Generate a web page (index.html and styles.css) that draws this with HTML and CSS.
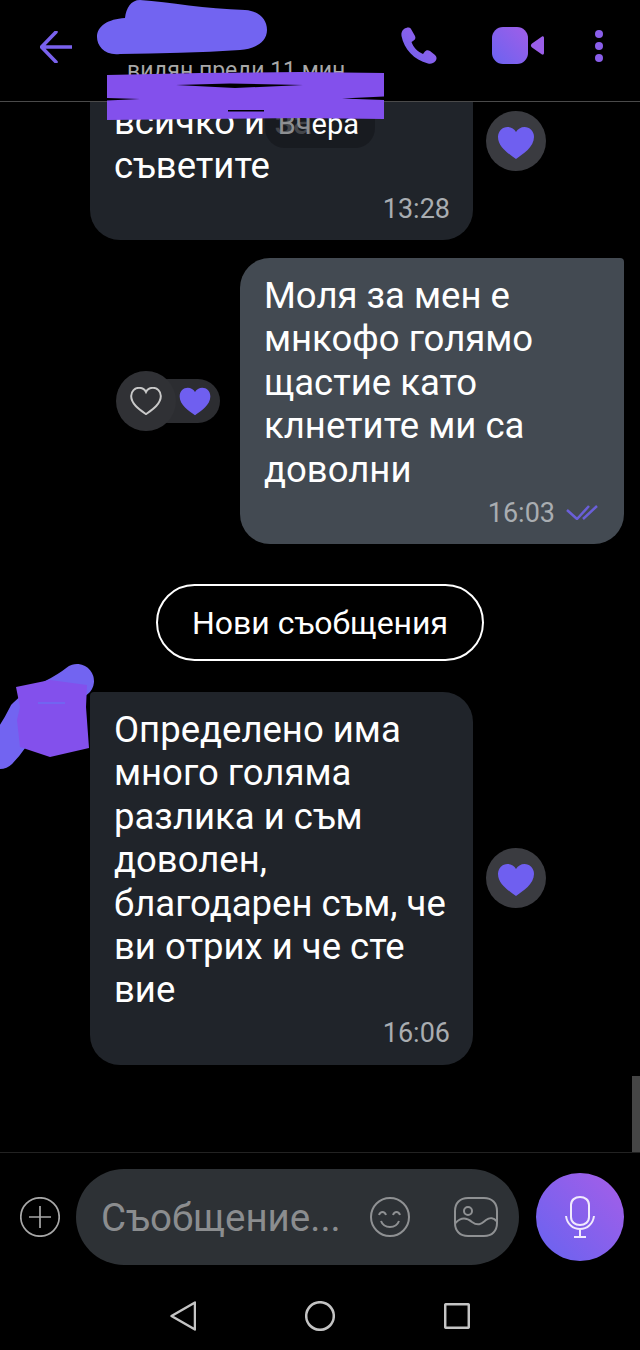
FILE: index.html
```html
<!DOCTYPE html>
<html lang="bg">

<head>
    <meta charset="UTF-8">
    <meta name="viewport" content="width=device-width, initial-scale=1.0">
    <title>Чат</title>
    <link rel="stylesheet" href="styles.css">
</head>

<body>
<div class="app">
    <svg class="defs" width="0" height="0">
        <defs>
            <linearGradient id="violet" x1="0" y1="1" x2="1" y2="0">
                <stop offset="0" stop-color="#6b63f0"/>
                <stop offset="1" stop-color="#a05ee8"/>
            </linearGradient>
            <path id="heart" d="M19 33C12 28 1 21 1 11 1 5 5.500 1 10.500 1 14 1 17.500 3 19 6 20.500 3 24 1 27.500 1 32.500 1 37 5 37 11 37 21 26 28 19 33Z"/>
        </defs>
    </svg>

    <div class="header">
        <svg class="back" width="32" height="32" viewBox="0 0 32 32">
            <path d="M32 16H2M16 1 1.500 16 16 31"/>
        </svg>
        <div class="title">
            <div class="status">видян преди 11 мин</div>
        </div>
        <div class="actions">
            <svg class="call" width="36" height="37" viewBox="0 0 36 37">
                <path fill="url(#violet)" d="M3 2C6 0 9 0 10 2L14 9C15 11 14 13 12 14L10.500 15C12 20 17 25 22 27L23.500 25C25 23 27 23 29 24L34 28C36 30 36 32 34.500 34 32.500 36.500 30 37 27 36.500 13 33 3 22 .5 9 0 6 1 3.500 3 2Z"/>
            </svg>
            <svg class="video" width="52" height="37" viewBox="0 0 52 37">
                <rect width="36" height="37" rx="11" fill="url(#violet)"/>
                <path fill="#9a5ee8" d="M50 9.500C51.500 9 52 10 52 11V26C52 27 51.500 28 50 27.500L40 20.500C38.500 19.500 38.500 17.500 40 16.500Z"/>
            </svg>
            <svg class="dots" width="8" height="32" viewBox="0 0 8 32">
                <circle cx="4" cy="4" r="4" fill="#8a5eea"/>
                <circle cx="4" cy="16" r="4" fill="#8a5eea"/>
                <circle cx="4" cy="28" r="4" fill="#8a5eea"/>
            </svg>
        </div>
    </div>

    <div class="chat">
        <div class="date-pill"><span class="faded">Вч</span>ера</div>

        <div class="row row-in row-first">
            <div class="bubble bubble-in bubble-cut">
                <div class="text">всичко и <span class="faded">за</span><br>съветите</div>
                <div class="meta"><span class="time">13:28</span></div>
            </div>
            <div class="reaction">
                <svg width="38" height="34" viewBox="0 0 38 34"><use href="#heart" fill="#6f5ff0"/></svg>
            </div>
        </div>

        <div class="row row-out">
            <div class="reaction-pair">
                <div class="reaction">
                    <svg width="32" height="28" viewBox="0 0 38 34"><use href="#heart" fill="none" stroke="#c9c9c9" stroke-width="2.400"/></svg>
                </div>
                <div class="like-pill">
                    <svg width="34" height="29" viewBox="0 0 38 34"><use href="#heart" fill="#6f5ff0"/></svg>
                </div>
            </div>
            <div class="bubble bubble-out">
                <div class="text">Моля за мен е<br>мнкофо голямо<br>щастие като<br>клнетите ми са<br>доволни</div>
                <div class="meta">
                    <span class="time">16:03</span>
                    <svg class="ticks" width="32" height="15" viewBox="0 0 32 15">
                        <path d="M1 5 11 14 23 1M17 14 31 1"/>
                    </svg>
                </div>
            </div>
        </div>

        <div class="new-messages">Нови съобщения</div>

        <div class="row row-in">
            <div class="bubble bubble-in bubble-first">
                <div class="text">Определено има<br>много голяма<br>разлика и съм<br>доволен,<br>благодарен съм, че<br>ви отрих и че сте<br>вие</div>
                <div class="meta"><span class="time">16:06</span></div>
            </div>
            <div class="reaction">
                <svg width="38" height="34" viewBox="0 0 38 34"><use href="#heart" fill="#6f5ff0"/></svg>
            </div>
        </div>

        <div class="scrollbar"></div>
    </div>

    <div class="composer">
        <svg class="line-icon plus" width="40" height="40" viewBox="0 0 40 40">
            <circle cx="20" cy="20" r="19.200"/>
            <path d="M20 9V31M9 20H31"/>
        </svg>
        <div class="input">
            <span class="placeholder">Съобщение...</span>
            <svg class="line-icon" width="40" height="40" viewBox="0 0 40 40">
                <circle cx="20" cy="20" r="19"/>
                <path d="M9 18C10.500 14 14.500 14 16 18M23 18C24.500 14 28.500 14 30 18M11 24C14 32 26 32 29 24"/>
            </svg>
            <svg class="line-icon gallery" width="44" height="40" viewBox="0 0 44 40">
                <path d="M14 1H30C38 1 43 6 43 14V26C43 34 38 39 30 39H14C6 39 1 34 1 26V14C1 6 6 1 14 1Z"/>
                <circle cx="14" cy="14" r="4"/>
                <path d="M1.500 26C7 20 12 20 18 25 25 30 28 26 32 23 36 20 40 21 42.500 24"/>
            </svg>
        </div>
        <div class="mic">
            <svg width="30" height="42" viewBox="0 0 30 42">
                <path d="M15 1C10 1 6 4 6 9V21C6 26 10 29 15 29 20 29 24 26 24 21V9C24 4 20 1 15 1ZM1 20C2 28 8 33 15 33 22 33 28 28 29 20M15 33V41M9 41H21"/>
            </svg>
        </div>
    </div>

    <div class="nav">
        <svg width="26" height="30" viewBox="0 0 26 30"><path d="M25 1.500V28.500L1.500 15Z"/></svg>
        <svg width="30" height="30" viewBox="0 0 30 30"><circle cx="15" cy="15" r="13.800"/></svg>
        <svg width="26" height="26" viewBox="0 0 26 26"><rect x="1.200" y="1.200" width="23.600" height="23.600" rx="1"/></svg>
    </div>

    <!-- закриване на имена и аватар, нарисувано върху снимката -->
    <svg class="scribbles" width="640" height="1350" viewBox="0 0 640 1350">
        <path fill="#7264f1" d="M125 18C126 8 131 0 140 0 170 2 205 9 245 10 260 11 267 20 267 30 267 42 255 49 240 50 200 53 160 53 120 54 105 56 97 46 97 37 97 26 108 19 125 18Z"/>
        <path fill="#8350ec" d="M107 75 200 73 300 72 384 73 384 119 300 118 200 119 107 120Z"/>
        <path fill="#000" d="M176 85 230 83.500 303 85 235 88ZM107 98 140 99 107 100.500ZM342 98.500 384 96.500 384 100ZM228 110H264V111.500H228Z"/>
        <path fill="none" stroke="#7264f1" stroke-width="34" stroke-linecap="round" d="M77 681C60 695 40 700 25 715 20 725 10 742 0 752"/>
        <path fill="#8350ec" d="M16 687 50 680 87 685 86 707 89 748 50 757 20 747 17 720 20 707Z"/>
        <path fill="#7264f1" d="M38 702H65V704H38Z"/>
    </svg>
</div>
</body>

</html>
```

FILE: styles.css
```css
html,
body {
    margin: 0;
    padding: 0;
    background: #000;
}

.app {
    width: 640px;
    height: 1350px;
    position: relative;
    overflow: hidden;
    display: flex;
    flex-direction: column;
    background: #000;
    color: #fff;
    font-family: Roboto, "Noto Sans", sans-serif;
}

.defs {
    position: absolute;
}

.faded {
    color: #8d8f92;
}

.header {
    height: 102px;
    flex: none;
    display: flex;
    box-sizing: border-box;
    padding: 27px 37px 0 40px;
    border-bottom: 1px solid #4a4a4a;
}

.back {
    flex: none;
    margin-top: 4px;
}

.back path {
    fill: none;
    stroke: #7a62ee;
    stroke-width: 3.5;
    stroke-linejoin: round;
    stroke-linecap: round;
}

.title {
    flex: 1;
    margin-left: 55px;
}

.status {
    margin-top: 31px;
    font-size: 23px;
    line-height: 26px;
    color: #a8a8a8;
    white-space: nowrap;
}

.actions {
    display: flex;
    align-items: flex-start;
}

.video {
    margin-left: 55px;
}

.dots {
    margin-left: 51px;
    margin-top: 3px;
}

.chat {
    flex: 1;
    min-height: 0;
    position: relative;
    overflow: hidden;
    display: flex;
    flex-direction: column;
}

.row {
    display: flex;
    align-items: center;
    flex: none;
}

.row-in {
    padding-left: 90px;
    gap: 13px;
}

.row-in .reaction svg {
    margin-top: 3px;
}

.row-first {
    margin-top: -60px;
}

.row-out {
    justify-content: flex-end;
    margin-top: 18px;
    padding-right: 16px;
    gap: 20px;
}

.bubble {
    box-sizing: border-box;
    padding: 16px 23px 10px 24px;
    border-radius: 30px;
}

.bubble-in {
    width: 383px;
    background: #20242a;
}

.bubble-cut {
    padding-top: 58.200px;
}

.bubble-first {
    border-top-left-radius: 4px;
}

.bubble-out {
    width: 384px;
    background: #434a52;
    border-top-right-radius: 4px;
    padding-right: 26px;
}

.text {
    font-size: 36.500px;
    line-height: 43.400px;
    white-space: nowrap;
}

.meta {
    height: 43px;
    display: flex;
    align-items: center;
    justify-content: flex-end;
    gap: 11px;
}

.time {
    font-size: 27px;
    color: #a9adb1;
}

.ticks path {
    fill: none;
    stroke: #6a5fd8;
    stroke-width: 2.500;
}

.reaction {
    width: 60px;
    height: 60px;
    flex: none;
    border-radius: 50%;
    background: #3a3b40;
    display: flex;
    align-items: center;
    justify-content: center;
}

.reaction-pair {
    display: flex;
    align-items: center;
}

.like-pill {
    height: 44px;
    margin-left: -30px;
    padding: 0 8px 0 32px;
    border-radius: 22px;
    background: #2c2d31;
    display: flex;
    align-items: center;
}

.reaction-pair .reaction {
    position: relative;
    z-index: 1;
    background: #303135;
}

.date-pill {
    position: absolute;
    left: 265px;
    top: -2px;
    width: 110px;
    height: 48px;
    box-sizing: border-box;
    padding: 0 16px 0 0;
    border-radius: 0 0 20px 20px;
    background: rgba(20, 22, 26, 0.6);
    font-size: 29px;
    line-height: 48px;
    text-align: right;
    z-index: 1;
}

.new-messages {
    width: 328px;
    height: 77px;
    flex: none;
    box-sizing: border-box;
    margin: 40px auto 31px;
    border: 2px solid #fff;
    border-radius: 39px;
    font-size: 32px;
    line-height: 75px;
    text-align: center;
}

.scrollbar {
    position: absolute;
    right: 0;
    bottom: 0;
    width: 8px;
    height: 76px;
    background: #454545;
}

.composer {
    flex: none;
    display: flex;
    align-items: center;
    padding: 16px 16px 0 20px;
    border-top: 1px solid #222;
}

.line-icon {
    flex: none;
}

.line-icon circle,
.line-icon path {
    fill: none;
    stroke: #8f9193;
    stroke-width: 2;
}

.plus {
    margin-right: 16px;
}

.plus circle,
.plus path {
    stroke: #a8a8a8;
    stroke-width: 1.700;
}

.input {
    flex: 1;
    height: 96px;
    display: flex;
    align-items: center;
    padding: 0 21px 0 25px;
    border-radius: 48px;
    background: #2d3135;
}

.placeholder {
    flex: 1;
    font-size: 38.500px;
    color: #8b8d8f;
    white-space: nowrap;
}

.gallery {
    margin-left: 44px;
}

.mic {
    width: 88px;
    height: 88px;
    flex: none;
    margin-left: 17px;
    border-radius: 50%;
    background: linear-gradient(45deg, #6763f0, #a65ee8);
    display: flex;
    align-items: center;
    justify-content: center;
}

.mic path {
    fill: none;
    stroke: #f1eafd;
    stroke-width: 2;
}

.nav {
    height: 85px;
    flex: none;
    display: flex;
    align-items: center;
    justify-content: center;
    gap: 109px;
    padding: 16px 1px 0 0;
    box-sizing: border-box;
}

.nav path,
.nav circle,
.nav rect {
    fill: none;
    stroke: #c4c4c4;
    stroke-width: 2.500;
    stroke-linejoin: round;
}

.scribbles {
    position: absolute;
    left: 0;
    top: 0;
    z-index: 2;
    pointer-events: none;
}
```
